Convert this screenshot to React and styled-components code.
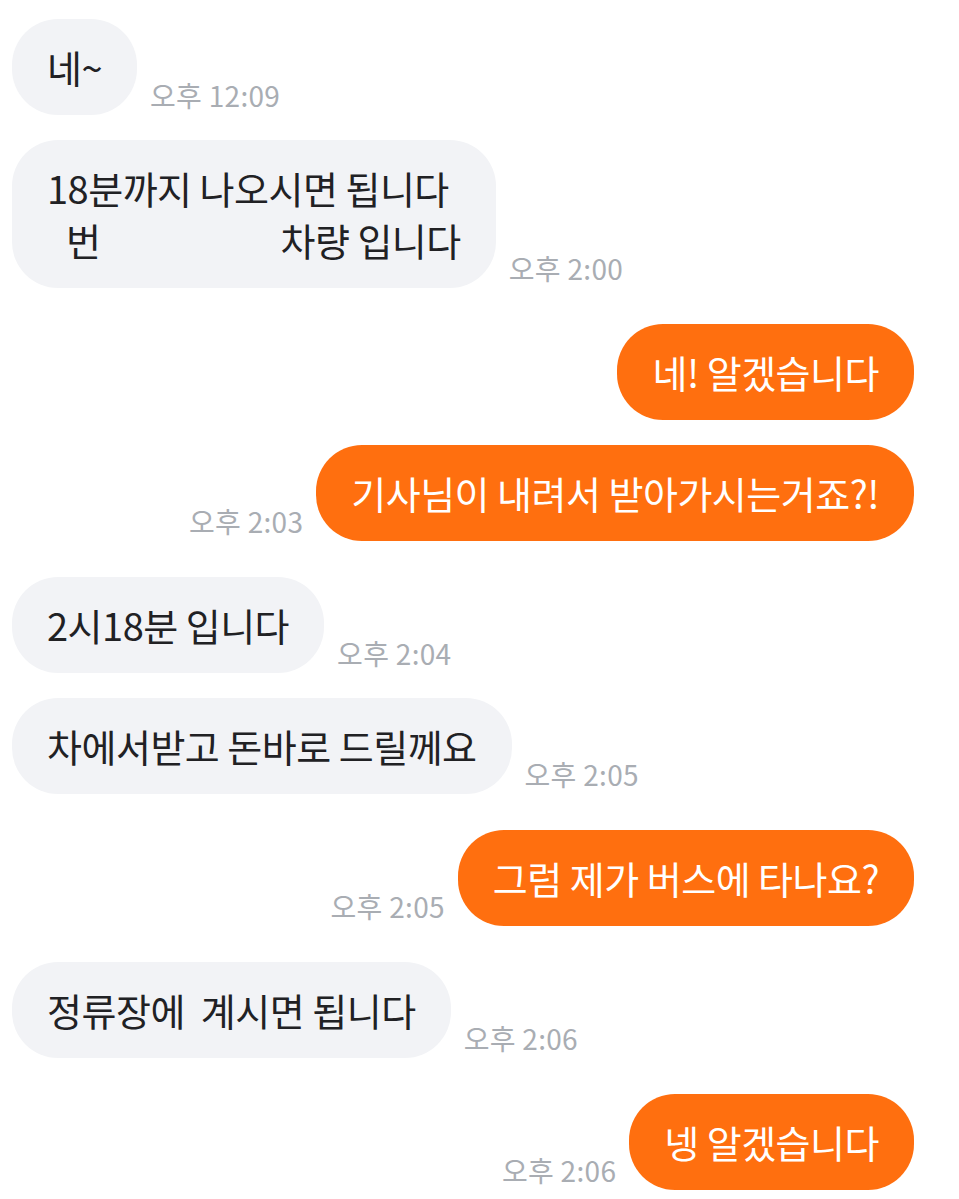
import React from 'react';
import styled, { createGlobalStyle } from 'styled-components';

const GlobalStyle = createGlobalStyle`
  html, body {
    margin: 0;
    padding: 0;
    background: #ffffff;
  }
  body {
    font-family: "Noto Sans CJK KR", "Noto Sans", sans-serif;
  }
`;

const Thread = styled.div`
  width: 959px;
  height: 1199px;
  box-sizing: border-box;
  padding: 19px 45px 0 12px;
  display: flex;
  flex-direction: column;
  overflow: hidden;
  background: #ffffff;
`;

const Row = styled.div`
  display: flex;
  align-items: flex-end;
  justify-content: ${(p) => (p.mine ? 'flex-end' : 'flex-start')};
  gap: 13px;
  margin-top: ${(p) => p.offset}px;
`;

const Bubble = styled.div`
  box-sizing: border-box;
  padding: 22px 35px;
  border-radius: 46px;
  background: ${(p) => (p.mine ? '#ff6f0f' : '#f2f3f6')};
  color: ${(p) => (p.mine ? '#ffffff' : '#212124')};
  font-size: 38px;
  line-height: 52px;
  letter-spacing: -0.5px;
  white-space: nowrap;
`;

const Line = styled.div`
  display: flex;
  white-space: pre;
`;

const Blank = styled.span`
  display: inline-block;
  width: ${(p) => p.w}px;
`;

const Time = styled.span`
  color: #a9adb3;
  font-size: 28px;
  line-height: 30px;
  margin-bottom: 5px;
  white-space: nowrap;
  letter-spacing: 0.3px;
`;

const messages = [
  { mine: false, time: '오후 12:09', lines: ['네~'] },
  { mine: false, time: '오후 2:00', lines: ['18분까지 나오시면 됩니다', 'redacted'] },
  { mine: true, time: null, lines: ['네! 알겠습니다'] },
  { mine: true, time: '오후 2:03', lines: ['기사님이 내려서 받아가시는거죠?!'] },
  { mine: false, time: '오후 2:04', lines: ['2시18분 입니다'] },
  { mine: false, time: '오후 2:05', lines: ['차에서받고 돈바로 드릴께요'] },
  { mine: true, time: '오후 2:05', lines: ['그럼 제가 버스에 타나요?'] },
  { mine: false, time: '오후 2:06', lines: ['정류장에  계시면 됩니다'] },
  { mine: true, time: '오후 2:06', lines: ['넹 알겠습니다'] },
];

function renderLine(text, i) {
  if (text === 'redacted') {
    return (
      <Line key={i}>
        <Blank w={19} />
        번
        <Blank w={180} />
        차량 입니다
      </Line>
    );
  }
  return <Line key={i}>{text}</Line>;
}

export default function App() {
  return (
    <>
      <GlobalStyle />
      <Thread>
        {messages.map((m, i) => {
          const prev = messages[i - 1];
          const offset = i === 0 ? 0 : prev.mine === m.mine ? 25 : 36;
          const bubble = (
            <Bubble mine={m.mine}>{m.lines.map(renderLine)}</Bubble>
          );
          const time = m.time ? <Time>{m.time}</Time> : null;
          return (
            <Row key={i} mine={m.mine} offset={offset}>
              {m.mine ? time : bubble}
              {m.mine ? bubble : time}
            </Row>
          );
        })}
      </Thread>
    </>
  );
}
